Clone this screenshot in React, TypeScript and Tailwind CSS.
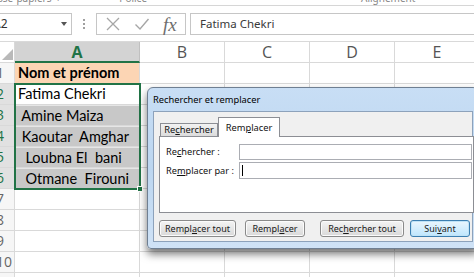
import React from "react";

const grid = "border-[#d9d9d9]";

function RowHeader({ n, sel, blue }: { n: number; sel?: boolean; blue?: boolean }) {
  return (
    <div
      className={`w-[15px] h-full shrink-0 overflow-hidden border-r border-b ${grid} ${
        sel ? "bg-[#e1e1e1] text-[#217346]" : "bg-[#f6f6f6] text-[#666]"
      } ${blue ? "text-[#4f7fb0]" : ""} flex items-center`}
    >
      <span className="ml-[-4px] text-[14px] leading-none" style={{ fontFamily: "'Open Sans', sans-serif" }}>
        {n}
      </span>
    </div>
  );
}

function Row({
  n,
  a,
  kind,
}: {
  n: number;
  a?: string;
  kind?: "head" | "active" | "sel" | "none";
}) {
  const aCls =
    kind === "head"
      ? "bg-[#fcd5b4] font-bold pl-[3px]"
      : kind === "active"
      ? "bg-white pl-[3px]"
      : kind === "sel"
      ? "bg-[#c8c8c8] border-t border-t-[#e6e6e6] pl-[3px]"
      : "bg-white";
  return (
    <div className="flex h-[21px] shrink-0">
      <RowHeader n={n} sel={kind === "active" || kind === "sel"} blue={n === 1} />
      <div
        className={`w-[125px] shrink-0 border-r border-b ${grid} ${aCls} flex items-center text-[14.5px] text-black whitespace-pre`}
        style={{ fontFamily: "Lato, 'Liberation Sans', sans-serif" }}
      >
        {a}
      </div>
      <div className={`w-[85px] shrink-0 border-r border-b ${grid} bg-white`} />
      <div className={`w-[85px] shrink-0 border-r border-b ${grid} bg-white`} />
      <div className={`w-[85px] shrink-0 border-r border-b ${grid} bg-white`} />
      <div className={`w-[85px] shrink-0 border-r border-b ${grid} bg-white`} />
    </div>
  );
}

function Btn({
  children,
  w,
  def,
  ml,
}: {
  children: React.ReactNode;
  w: string;
  def?: boolean;
  ml: string;
}) {
  return (
    <div
      className={`${w} ${ml} h-[17px] rounded-[3px] border flex items-center justify-center text-[9px] text-[#1a1a1a] ${
        def
          ? "border-[#3c7fb1] bg-gradient-to-b from-[#eaf6fd] to-[#bee6fd] shadow-[inset_0_0_0_1px_#bfe3f7]"
          : "border-[#8a8a8a] bg-gradient-to-b from-[#f4f4f4] to-[#d9d9d9] shadow-[inset_0_0_0_1px_#fbfbfb]"
      }`}
    >
      {children}
    </div>
  );
}

export default function App() {
  const ui = { fontFamily: "'Noto Sans', 'Open Sans', sans-serif" };
  return (
    <div className="relative w-[474px] h-[277px] overflow-hidden bg-white">
      {/* ribbon bottom labels */}
      <div
        className="relative h-[6px] border-b border-[#d6d6d6] overflow-hidden text-[10px] text-[#888]"
        style={ui}
      >
        <div className="flex h-[6px] leading-[10px] mt-[-7px]">
          <span className="ml-[-2px] block">sse-papiers</span>
          <span className="ml-[6px] block">⌐</span>
          <span className="ml-[56px] block">Police</span>
          <span className="ml-[214px] block">Alignement</span>
        </div>
      </div>

      {/* formula bar */}
      <div className="flex h-[22px] mt-[7px] items-stretch">
        <div className="w-[73px] ml-[-1px] border border-[#c6c6c6] flex items-center overflow-hidden relative">
          <span className="ml-[-7px] text-[12px] text-[#333]" style={ui}>
            A2
          </span>
          <span className="absolute left-[61px] top-[8px] w-0 h-0 border-l-[3.5px] border-r-[3.5px] border-t-[4px] border-l-transparent border-r-transparent border-t-[#555]" />
        </div>
        <div className="w-[24px] flex flex-col items-center justify-center gap-[2px]">
          <span className="w-[2px] h-[2px] bg-[#a0a0a0]" />
          <span className="w-[2px] h-[2px] bg-[#a0a0a0]" />
          <span className="w-[2px] h-[2px] bg-[#a0a0a0]" />
        </div>
        <div className="w-[90px] border border-[#c6c6c6] flex items-center">
          <svg width="16" height="16" viewBox="0 0 16 16" className="ml-[8px]">
            <path d="M2 2 L14 14 M14 2 L2 14" stroke="#a6a6a6" strokeWidth="1.3" fill="none" />
          </svg>
          <svg width="16" height="16" viewBox="0 0 16 16" className="ml-[13px]">
            <path d="M1.5 8.5 L6 13 L14.5 3" stroke="#a6a6a6" strokeWidth="1.4" fill="none" />
          </svg>
          <span
            className="ml-[13px] text-[19px] italic text-[#6e6e6e] leading-none"
            style={{ fontFamily: "'Liberation Serif', serif" }}
          >
            fx
          </span>
        </div>
        <div className="w-[4px]" />
        <div className="flex-1 border border-r-0 border-[#c6c6c6] flex items-center pl-[9px]">
          <span className="text-[11.5px] text-[#3a3a3a]" style={ui}>
            Fatima Chekri
          </span>
        </div>
      </div>

      {/* column headers */}
      <div className="mt-[6px] flex h-[22px] border-t border-[#d9d9d9]" style={{ fontFamily: "'Open Sans', sans-serif" }}>
        <div className={`w-[15px] shrink-0 border-r border-b ${grid} bg-white relative`}>
          <span
            className="absolute right-[1px] bottom-[2px] w-0 h-0"
            style={{ borderBottom: "11px solid #b9b9b9", borderLeft: "11px solid transparent" }}
          />
        </div>
        <div className="w-[125px] shrink-0 bg-[#d3d3d3] border-r border-[#c0c0c0] border-b-2 border-b-[#217346] flex items-center justify-center text-[16px] font-bold text-[#217346]">
          A
        </div>
        {["B", "C", "D", "E"].map((c) => (
          <div
            key={c}
            className={`w-[85px] shrink-0 border-r border-b ${grid} bg-white flex items-center justify-center text-[16px] text-[#555]`}
          >
            {c}
          </div>
        ))}
      </div>

      {/* rows */}
      <div className="flex flex-col">
        <Row n={1} a="Nom et prénom" kind="head" />
        <Row n={2} a="Fatima Chekri" kind="active" />
        <Row n={3} a=" Amine Maiza" kind="sel" />
        <Row n={4} a=" Kaoutar  Amghar" kind="sel" />
        <Row n={5} a="  Loubna El  bani" kind="sel" />
        <Row n={6} a="  Otmane  Firouni" kind="sel" />
        <Row n={7} />
        <Row n={8} />
        <Row n={9} />
        <Row n={10} />
        <Row n={11} />
      </div>

      {/* selection border */}
      <div className="absolute left-[14px] top-[83px] w-[127px] h-[107px] border-2 border-[#217346] pointer-events-none" />
      <div className="absolute left-[137px] top-[186px] w-[6px] h-[6px] bg-[#217346] border border-white" />

      {/* dialog */}
      <div
        className="absolute left-[147px] top-[87px] w-[332px] h-[162px] rounded-t-[6px] rounded-b-[4px] border border-[#6f7f92] bg-gradient-to-b from-[#c8def5] via-[#bcd6f0] to-[#cfe2f6] shadow-[0_5px_9px_rgba(0,0,0,0.55)] flex flex-col"
        style={ui}
      >
        <div className="h-[23px] flex items-center pl-[5px] text-[9.3px] text-black shrink-0">
          Rechercher et remplacer
        </div>
        <div className="ml-[5px] w-[320px] h-[131px] border border-[#8da2bb] bg-[#f0f0f0] pl-[5px] pt-[5px] flex flex-col">
          <div className="flex items-end h-[19px] text-[9.3px] text-[#111]">
            <div className="ml-[1px] w-[58px] h-[13px] border border-b-0 border-[#8c8e94] bg-gradient-to-b from-[#f2f2f2] to-[#dcdcdc] flex items-center justify-center">
              <span>
                Re<u>c</u>hercher
              </span>
            </div>
            <div className="relative z-10 -mb-px w-[62px] h-[20px] border border-b-0 border-[#8c8e94] bg-white flex items-center justify-center">
              <span>
                Rem<u>p</u>lacer
              </span>
            </div>
          </div>
          <div className="w-[315px] h-[77px] border border-[#8c8e94] bg-white pt-[7px] pl-[6px] text-[9.2px] text-[#111]">
            <div className="flex items-center h-[16px]">
              <span className="w-[73px] shrink-0">
                Re<u>c</u>hercher :
              </span>
              <div className="w-[233px] h-[16px] border border-[#abadb3] bg-white" />
            </div>
            <div className="flex items-center h-[17px] mt-[2px]">
              <span className="w-[73px] shrink-0">
                Re<u>m</u>placer par :
              </span>
              <div className="w-[233px] h-[17px] border border-[#abadb3] bg-white flex items-center pl-[2px]">
                <span className="w-px h-[11px] bg-black" />
              </div>
            </div>
          </div>
          <div className="flex mt-[7px]">
            <Btn w="w-[77px]" ml="ml-0">
              Rempl<u>a</u>cer tout
            </Btn>
            <Btn w="w-[60px]" ml="ml-[9px]">
              Rempl<u>a</u>cer
            </Btn>
            <Btn w="w-[84px]" ml="ml-[15px]">
              Rec<u>h</u>ercher tout
            </Btn>
            <Btn w="w-[60px]" ml="ml-[6px]" def>
              Sui<u>v</u>ant
            </Btn>
          </div>
        </div>
      </div>
    </div>
  );
}
